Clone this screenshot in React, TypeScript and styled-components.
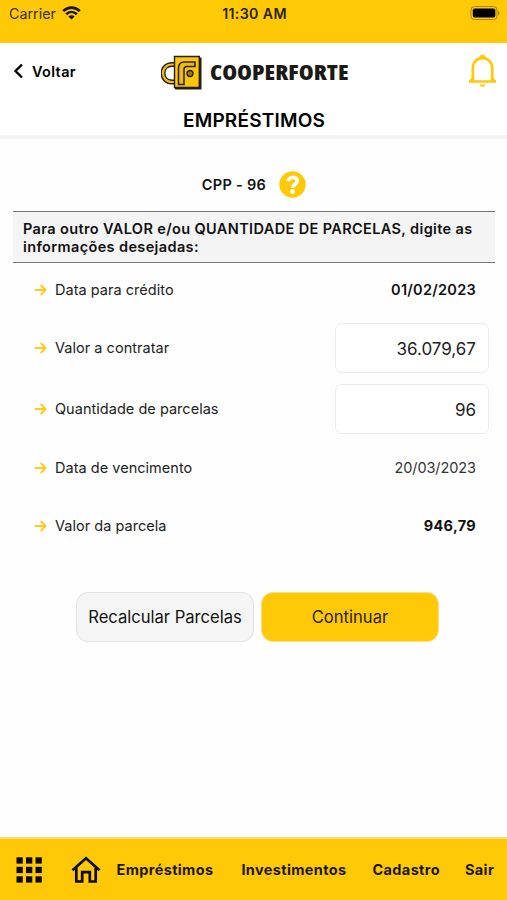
import React from "react";
import styled, { createGlobalStyle } from "styled-components";

const yellow = "#ffc907";

const GlobalStyle = createGlobalStyle`
  * { box-sizing: border-box; }
  body { margin: 0; background: #fff; font-family: Inter, "Liberation Sans", sans-serif; color: #111; }
  button, input { font-family: inherit; color: inherit; }
`;

const Screen = styled.div`
  width: 507px;
  height: 900px;
  display: flex;
  flex-direction: column;
  overflow: hidden;
  background: #fefefe;
`;

const StatusBar = styled.div`
  height: 43px;
  flex: none;
  background: ${yellow};
  display: grid;
  grid-template-columns: 1fr auto 1fr;
  align-items: start;
  padding: 4px 7px 0 9px;
  line-height: 20px;
`;

const Carrier = styled.div`
  display: flex;
  align-items: center;
  gap: 6px;
  height: 20px;

  svg {
    margin-top: -2px;
  }
`;

const Label = styled.span<{ $size: number; $weight?: number; $spacing?: number; $color?: string }>`
  font-size: ${(p) => p.$size}px;
  font-weight: ${(p) => p.$weight ?? 400};
  letter-spacing: ${(p) => p.$spacing ?? 0}px;
  color: ${(p) => p.$color ?? "#111"};
  white-space: nowrap;
`;

const BatteryIcon = styled.svg`
  justify-self: end;
  margin-top: 1px;
`;

const Header = styled.header`
  height: 96px;
  flex: none;
  background: #fff;
  border-bottom: 4px solid #f4f4f4;
`;

const TopRow = styled.div`
  height: 56px;
  display: grid;
  grid-template-columns: 161px 1fr auto;
  align-items: center;
  padding-right: 10px;
`;

const BackButton = styled.button`
  border: 0;
  background: none;
  padding: 0 0 0 13px;
  display: flex;
  align-items: center;
  gap: 8px;
`;

const Brand = styled.div`
  display: flex;
  align-items: center;
  gap: 8px;
  padding-top: 3px;
`;

const BrandName = styled.span`
  display: block;
  font: 800 21px/30px "Open Sans", sans-serif;
  font-stretch: 75%;
  color: #1b1a17;
  margin-top: -1px;
  white-space: nowrap;
  transform: scaleX(1.145);
  transform-origin: left center;
`;

const Title = styled.h1`
  margin: 9px 0 0;
  padding-left: 1px;
  text-align: center;
  font-size: 19px;
  line-height: 26px;
  font-weight: 600;
  letter-spacing: 0.2px;
  color: #000;
`;

const Main = styled.main`
  flex: 1;
`;

const Product = styled.div`
  height: 72px;
  display: flex;
  align-items: center;
  justify-content: center;
  gap: 13px;
  padding: 18px 0 0 1px;
`;

const Notice = styled.p`
  margin: 0 12px 0 13px;
  height: 52px;
  padding: 8px 10px 0;
  border-top: 1.5px solid #777;
  border-bottom: 1.5px solid #777;
  background: #f4f4f4;
  font-size: 14.5px;
  line-height: 17.5px;
  font-weight: 600;
  letter-spacing: 0.37px;
  white-space: nowrap;
`;

const Row = styled.div<{ $h: number }>`
  height: ${(p) => p.$h}px;
  display: flex;
  align-items: center;
  padding: 0 18px 0 34px;
`;

const RowName = styled.div`
  display: flex;
  align-items: center;
  gap: 8px;
  flex: 1;

  span {
    margin-top: -1px;
  }
`;

const Value = styled.div`
  padding-right: 13px;
  margin-top: -1px;
  display: flex;
`;

const Field = styled.input`
  width: 154px;
  height: 50px;
  border: 1.5px solid #ebebeb;
  border-radius: 7px;
  background: #fff;
  text-align: right;
  padding: 1px 12px 0;
  font-size: 17px;
  color: #222;
  outline: none;
`;

const Actions = styled.div`
  display: flex;
  justify-content: center;
  gap: 7px;
  padding: 37px 0 0 8px;
`;

const Action = styled.button<{ $primary?: boolean }>`
  width: 178px;
  height: 50px;
  padding: 0;
  border-radius: 12px;
  border: 1px solid ${(p) => (p.$primary ? "#fbe08a" : "#e2e2e2")};
  background: ${(p) => (p.$primary ? yellow : "#f5f5f5")};
`;

const NavBar = styled.nav`
  height: 63px;
  flex: none;
  border-top: 2px solid #fbdc70;
  background: ${yellow};
  display: flex;
  align-items: center;
  padding: 0 12px 0 16px;
`;

const NavItem = styled.div<{ $left: number }>`
  margin-left: ${(p) => p.$left}px;
  display: flex;
`;

const Wifi = () => (
  <svg width="19" height="14" viewBox="0 0 19 14" fill="none" stroke="#17130a" strokeWidth="2.6">
    <path d="M1.2 5.2C6 .4 13 .4 17.8 5.2" />
    <path d="M4.2 8.3c3.1-3 7.5-3 10.6 0" />
    <path d="M9.5 13.5L6.4 10.5c1.8-1.6 4.4-1.6 6.2 0z" fill="#17130a" stroke="none" />
  </svg>
);

const Battery = () => (
  <BatteryIcon width="30" height="16" viewBox="0 0 30 16">
    <rect x="1" y="1.5" width="26" height="13" rx="3.5" fill="none" stroke="#a98714" />
    <rect x="2.8" y="3.4" width="22.5" height="9.2" rx="1.8" fill="#000" />
    <path d="M28 5.700c2 .6 2 4 0 4.600z" fill="#a98714" />
  </BatteryIcon>
);

const Logo = () => (
  <svg width="41" height="36" viewBox="0 0 41 36" fill="none">
    <path d="M14 9.500H11C-1 9.500-1 27 11 27h3" stroke="#24200f" strokeWidth="5" />
    <path d="M14 9.500H11C-1 9.500-1 27 11 27h3" stroke="#f6bf12" strokeWidth="2.200" />
    <path d="M15 2.500h25.500V34.500H14z" fill="#24200f" />
    <path d="M13.500 1.500h24.800v31H13.500z" fill="#fdc50a" stroke="#24200f" strokeWidth="1.400" />
    <path d="M17.500 29.500V13q0-6 6-6H34v4.500H26q-3 0-3 3v15z" fill="#f0ba10" stroke="#24200f" strokeWidth="1.500" />
    <circle cx="29" cy="18.500" r="3" fill="#9c7a13" stroke="#24200f" strokeWidth="1.300" />
  </svg>
);

const Bell = () => (
  <svg width="29" height="34" viewBox="0 0 29 34" fill="none" stroke={yellow}>
    <path d="M4.800 27V14.500C4.800 8 9 4.200 14.500 4.200S24.200 8 24.200 14.500V27" strokeWidth="2.700" />
    <path d="M1.800 27.500l3-3.700M27.200 27.500l-3-3.700" strokeWidth="2" />
    <path d="M1 27.500h27" strokeWidth="2.500" />
    <path d="M11 5c0-6 7-6 7 0zM11.500 30.500h6c0 2.900-6 2.900-6 0z" fill={yellow} stroke="none" />
  </svg>
);

const Arrow = () => (
  <svg width="13" height="12" viewBox="0 0 13 12" fill="none" stroke="#ffcb16" strokeWidth="1.800" strokeLinecap="round" strokeLinejoin="round">
    <path d="M1.500 6H11.500M7.200 1.500L11.600 6 7.200 10.500" />
  </svg>
);

const Help = () => (
  <svg width="27" height="27" viewBox="0 0 27 27" fill="none">
    <circle cx="13.500" cy="13.500" r="13.200" fill={yellow} />
    <path d="M9.200 10.300C9.400 5.200 18.200 5.300 18.200 10c0 3.500-4.600 3.100-4.600 6.800" stroke="#fff" strokeWidth="3.700" />
    <circle cx="13.500" cy="20.500" r="2.400" fill="#fff" />
  </svg>
);

const cells = [0, 9.5, 19];
const Grid = () => (
  <svg width="26" height="26" viewBox="0 0 26 26" fill="#0c0a02">
    {cells.map((y) => cells.map((x) => <rect key={`${x}-${y}`} x={x + 0.5} y={y + 0.3} width="6.300" height="6.300" />))}
  </svg>
);

const Home = () => (
  <svg width="30" height="28" viewBox="0 0 30 28" fill="none" stroke="#0c0a02" strokeWidth="2.700">
    <path d="M1.500 14.300L15 2.200l13.500 12.100" />
    <path d="M5.300 12V25.500h5.900v-9.300h7.600v9.300h5.900V12" />
  </svg>
);

const RowTitle = ({ text }: { text: string }) => (
  <RowName>
    <Arrow />
    <Label $size={14.5} $spacing={0.03} $color="#222">{text}</Label>
  </RowName>
);

export default function App() {
  return (
    <Screen>
      <GlobalStyle />
      <StatusBar>
        <Carrier>
          <Label $size={14.3} $color="#3a2f08">Carrier</Label>
          <Wifi />
        </Carrier>
        <Label $size={14.2} $weight={600} $spacing={0.35} $color="#2b2205">11:30 AM</Label>
        <Battery />
      </StatusBar>
      <Header>
        <TopRow>
          <BackButton>
            <svg width="11" height="16" viewBox="0 0 11 16" fill="none" stroke="#000" strokeWidth="2.400">
              <path d="M9 1.500L2.500 8 9 14.500" />
            </svg>
            <Label $size={14.5} $weight={600} $spacing={0.35} $color="#000">Voltar</Label>
          </BackButton>
          <Brand>
            <Logo />
            <BrandName>COOPERFORTE</BrandName>
          </Brand>
          <Bell />
        </TopRow>
        <Title>EMPRÉSTIMOS</Title>
      </Header>
      <Main>
        <Product>
          <Label $size={14.5} $weight={600} $spacing={0.3}>CPP - 96</Label>
          <Help />
        </Product>
        <Notice>
          Para outro VALOR e/ou QUANTIDADE DE PARCELAS, digite as
          <br />
          informações desejadas:
        </Notice>
        <Row $h={54}>
          <RowTitle text="Data para crédito" />
          <Value><Label $size={14.5} $weight={600} $spacing={0.28}>01/02/2023</Label></Value>
        </Row>
        <Row $h={62}>
          <RowTitle text="Valor a contratar" />
          <Field aria-label="Valor a contratar" defaultValue="36.079,67" />
        </Row>
        <Row $h={60}>
          <RowTitle text="Quantidade de parcelas" />
          <Field aria-label="Quantidade de parcelas" defaultValue="96" />
        </Row>
        <Row $h={57}>
          <RowTitle text="Data de vencimento" />
          <Value><Label $size={14.5} $spacing={-0.08} $color="#333">20/03/2023</Label></Value>
        </Row>
        <Row $h={59}>
          <RowTitle text="Valor da parcela" />
          <Value><Label $size={14.5} $weight={700} $spacing={0.3}>946,79</Label></Value>
        </Row>
        <Actions>
          <Action><Label $size={16.6} $spacing={-0.02}>Recalcular Parcelas</Label></Action>
          <Action $primary><Label $size={16.6} $color="#2c2304">Continuar</Label></Action>
        </Actions>
      </Main>
      <NavBar>
        <NavItem $left={0}><Grid /></NavItem>
        <NavItem $left={28.5}><Home /></NavItem>
        <NavItem $left={16}><Label $size={14.5} $weight={700} $spacing={0.36} $color="#1d1703">Empréstimos</Label></NavItem>
        <NavItem $left={28}><Label $size={14.5} $weight={700} $spacing={0.36} $color="#1d1703">Investimentos</Label></NavItem>
        <NavItem $left={26}><Label $size={14.5} $weight={700} $spacing={0.36} $color="#1d1703">Cadastro</Label></NavItem>
        <NavItem $left={25}><Label $size={14.5} $weight={700} $spacing={0.36} $color="#1d1703">Sair</Label></NavItem>
      </NavBar>
    </Screen>
  );
}
